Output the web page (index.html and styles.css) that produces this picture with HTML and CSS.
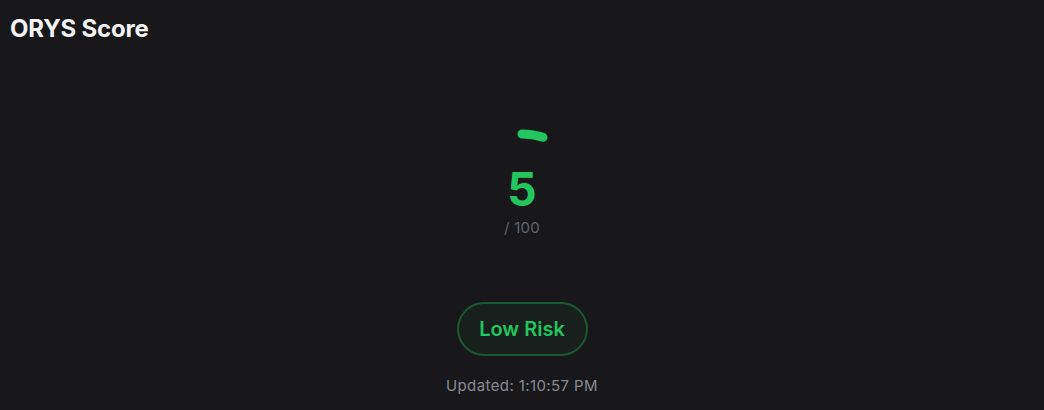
FILE: index.html
```html
<!DOCTYPE html>
<html lang="en">
<head>
<meta charset="utf-8">
<title>ORYS Score</title>
<link rel="stylesheet" href="styles.css">
</head>
<body>
<div class="card">
  <h1 class="title">ORYS Score</h1>
  <div class="content">
    <div class="gauge">
      <svg class="gauge-svg" width="160" height="160" viewBox="0 0 160 160">
        <path d="M80 13 A68 68 0 0 1 101 16.3" fill="none" stroke="#22c55e" stroke-width="9" stroke-linecap="round"/>
      </svg>
      <div class="gauge-label">
        <span class="score">5</span>
        <span class="max">/ 100</span>
      </div>
    </div>
    <div class="badge">Low Risk</div>
    <div class="updated">Updated: 1:10:57 PM</div>
  </div>
</div>
</body>
</html>
```
FILE: styles.css
```css
* { box-sizing: border-box; }
html, body {
  margin: 0;
  padding: 0;
  background: #18181b;
  font-family: Inter, "Noto Sans", sans-serif;
}
.card {
  width: 1044px;
  height: 410px;
  padding: 15px 10px 0;
}
.title {
  margin: 0;
  font-size: 24px;
  line-height: 28px;
  font-weight: 700;
  color: #f4f4f5;
  letter-spacing: -0.2px;
}
.content {
  display: flex;
  flex-direction: column;
  align-items: center;
  margin-top: 78px;
}
.gauge {
  position: relative;
  width: 160px;
  height: 160px;
}
.gauge-svg { display: block; }
.gauge-label {
  position: absolute;
  inset: 0;
  display: flex;
  flex-direction: column;
  align-items: center;
  justify-content: center;
  padding-top: 0;
}
.score {
  font-size: 46px;
  line-height: 50px;
  font-weight: 700;
  color: #22c55e;
}
.max {
  margin-top: 4px;
  font-size: 15px;
  line-height: 20px;
  color: #63636b;
  letter-spacing: 0.3px;
}
.badge {
  margin-top: 21px;
  width: 131px;
  height: 54px;
  border: 2px solid rgba(34, 197, 94, 0.35);
  border-radius: 27px;
  background: rgba(34, 197, 94, 0.04);
  display: flex;
  align-items: center;
  justify-content: center;
  color: #22c55e;
  font-size: 20px;
  font-weight: 600;
}
.updated {
  margin-top: 20px;
  font-size: 15px;
  color: #8a8a91;
  letter-spacing: 0.4px;
}
```
